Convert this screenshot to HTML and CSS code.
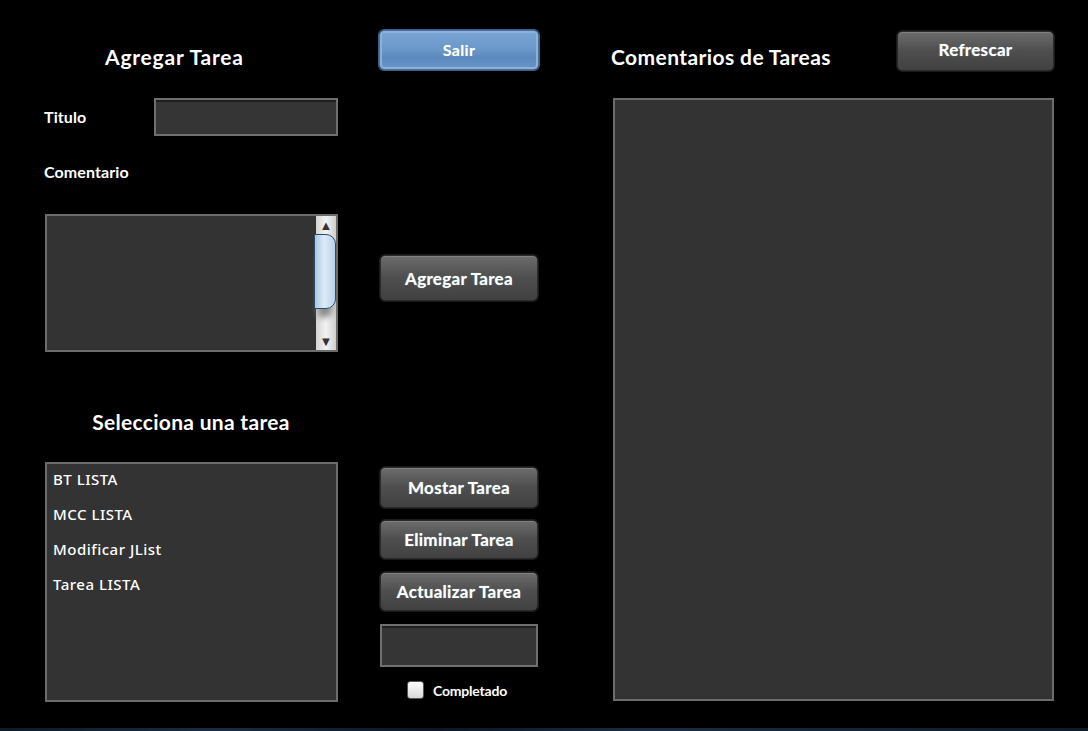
FILE: index.html
```html
<!DOCTYPE html>
<html lang="es">
<head>
<meta charset="utf-8">
<title>Tareas</title>
<link rel="stylesheet" href="styles.css">
</head>
<body>
<div class="window">
  <div class="col col-left">
    <h2 class="title title-add">Agregar Tarea</h2>
    <div class="field-row">
      <label class="label label-titulo">Titulo</label>
      <div class="input input-titulo"></div>
    </div>
    <label class="label label-coment">Comentario</label>
    <div class="textarea textarea-coment">
      <div class="scrollbar">
        <div class="sb-arrow">▲</div>
        <div class="sb-track">
          <div class="sb-thumb"></div>
        </div>
        <div class="sb-arrow">▼</div>
      </div>
    </div>
    <h2 class="title title-select">Selecciona una tarea</h2>
    <ul class="list">
      <li>BT LISTA</li>
      <li>MCC LISTA</li>
      <li>Modificar JList</li>
      <li>Tarea LISTA</li>
    </ul>
  </div>

  <div class="col col-mid">
    <button class="btn btn-blue btn-salir">Salir</button>
    <button class="btn btn-agregar">Agregar Tarea</button>
    <button class="btn btn-mostrar">Mostar Tarea</button>
    <button class="btn btn-eliminar">Eliminar Tarea</button>
    <button class="btn btn-actualizar">Actualizar Tarea</button>
    <div class="input input-mid"></div>
    <div class="check-row">
      <span class="checkbox"></span>
      <span class="check-label">Completado</span>
    </div>
  </div>

  <div class="col col-right">
    <div class="right-head">
      <h2 class="title title-coments">Comentarios de Tareas</h2>
      <button class="btn btn-refrescar">Refrescar</button>
    </div>
    <div class="textarea textarea-big"></div>
  </div>
</div>
<div class="taskbar"></div>
</body>
</html>
```

FILE: styles.css
```css
* { box-sizing: border-box; }
html, body { margin: 0; padding: 0; }
body {
  background: #000;
  width: 1088px;
  height: 731px;
  overflow: hidden;
  font-family: "Lato", "Liberation Sans", sans-serif;
  color: #fff;
}
.window {
  display: flex;
  height: 728px;
  padding-left: 44px;
}
.col { display: flex; flex-direction: column; }
.col-left { width: 294px; }
.col-mid { width: 160px; margin-left: 41px; align-items: center; }
.col-right { width: 443px; margin-left: 72px; }

.title {
  margin: 0;
  font-family: "Lato", sans-serif;
  font-weight: 700;
  font-size: 21px;
  line-height: 24px;
  letter-spacing: 0.4px;
  color: #fff;
  white-space: nowrap;
}
.title-add { margin-top: 45px; margin-left: 61px; letter-spacing: 0.8px; }
.title-select { margin-top: 58px; text-align: center; letter-spacing: 0.3px; }

.field-row {
  display: flex;
  align-items: center;
  margin-top: 29px;
}
.label {
  font-family: "Lato", sans-serif;
  font-weight: 700;
  font-size: 16px;
  line-height: 16px;
  letter-spacing: 0.1px;
  color: #fff;
}
.label-titulo { width: 110px; }
.label-coment { display: block; margin-top: 28px; }

.input {
  background: #353535;
  border: 2px solid #6f6f6f;
  box-shadow: inset 0 2px 0 #1f1f1f;
}
.input-titulo { width: 184px; height: 38px; }

.textarea {
  background: #333;
  border: 2px solid #6c6c6c;
}
.textarea-coment {
  margin-top: 34px;
  margin-left: 1px;
  width: 293px;
  height: 138px;
  display: flex;
  justify-content: flex-end;
}
.scrollbar {
  width: 20px;
  display: flex;
  flex-direction: column;
  background: linear-gradient(90deg, #d4d4d4, #f2f2f2 50%, #cfcfcf);
}
.sb-arrow {
  height: 18px;
  font-size: 13px;
  line-height: 18px;
  text-align: center;
  color: #333;
}
.sb-track {
  flex: 1;
  display: flex;
  flex-direction: column;
}
.sb-thumb {
  height: 75px;
  margin-left: -2px;
  border: 1px solid #2c4b6b;
  border-radius: 0 10px 10px 0;
  background: linear-gradient(90deg, #a9c6e0, #dcecf8 45%, #b9d2e8);
  box-shadow: 0 12px 6px -4px #888;
}

.list {
  list-style: none;
  margin: 28px 0 0 1px;
  padding: 6px 0 0 6px;
  width: 293px;
  height: 240px;
  background: #333;
  border: 2px solid #6c6c6c;
  font-family: "Noto Sans", "Open Sans", sans-serif;
  font-weight: 500;
  font-size: 15px;
  letter-spacing: 0.5px;
}
.list li { height: 35px; line-height: 19px; }

.btn {
  display: block;
  width: 158px;
  padding: 0;
  font-family: "Lato", sans-serif;
  font-weight: 700;
  font-size: 17px;
  letter-spacing: 0.3px;
  color: #fff;
  border: 1px solid #2a2a2a;
  border-radius: 5px;
  background: linear-gradient(#6c6c6c, #4e4e4e 50%, #414141);
  box-shadow: inset 0 1px 0 #808080, 0 0 0 1px #1a1a1a;
  text-shadow: 0 0 1px #9bb;
}
.btn-blue {
  width: 160px;
  border: 1px solid #4a6f99;
  background: linear-gradient(#7aa6d6, #6a97c8 50%, #5a88bd 70%, #6b98ca);
  box-shadow: inset 0 0 0 2px #8db0d6, 0 0 0 1px #3f5f86;
  font-size: 16px;
}
.btn-salir { margin-top: 30px; height: 40px; padding-bottom: 2px; }
.btn-agregar { margin-top: 185px; height: 46px; }
.btn-mostrar { margin-top: 166px; height: 41px; }
.btn-eliminar { margin-top: 12px; height: 39px; }
.btn-actualizar { margin-top: 13px; height: 39px; }
.input-mid { margin-top: 13px; width: 158px; height: 43px; }

.check-row {
  display: flex;
  align-items: center;
  margin-top: 14px;
  margin-left: -4px;
  gap: 9px;
}
.checkbox {
  width: 17px;
  height: 18px;
  border-radius: 3px;
  border: 1px solid #555;
  background: linear-gradient(#fdfdfd, #d8d8d8);
}
.check-label {
  font-family: "Lato", sans-serif;
  font-weight: 700;
  font-size: 14px;
  letter-spacing: -0.2px;
}

.right-head {
  display: flex;
  justify-content: space-between;
  align-items: flex-start;
  height: 71px;
}
.title-coments { margin-top: 45px; }
.btn-refrescar { margin-top: 31px; width: 157px; height: 40px; padding-bottom: 4px; }
.textarea-big {
  margin-top: 27px;
  margin-left: 2px;
  width: 441px;
  height: 603px;
}

.taskbar {
  height: 3px;
  background: linear-gradient(90deg, #0e1a28, #1a2c44 20%, #0c1626 40%, #1a2c44 60%, #0e1a28);
}
```
